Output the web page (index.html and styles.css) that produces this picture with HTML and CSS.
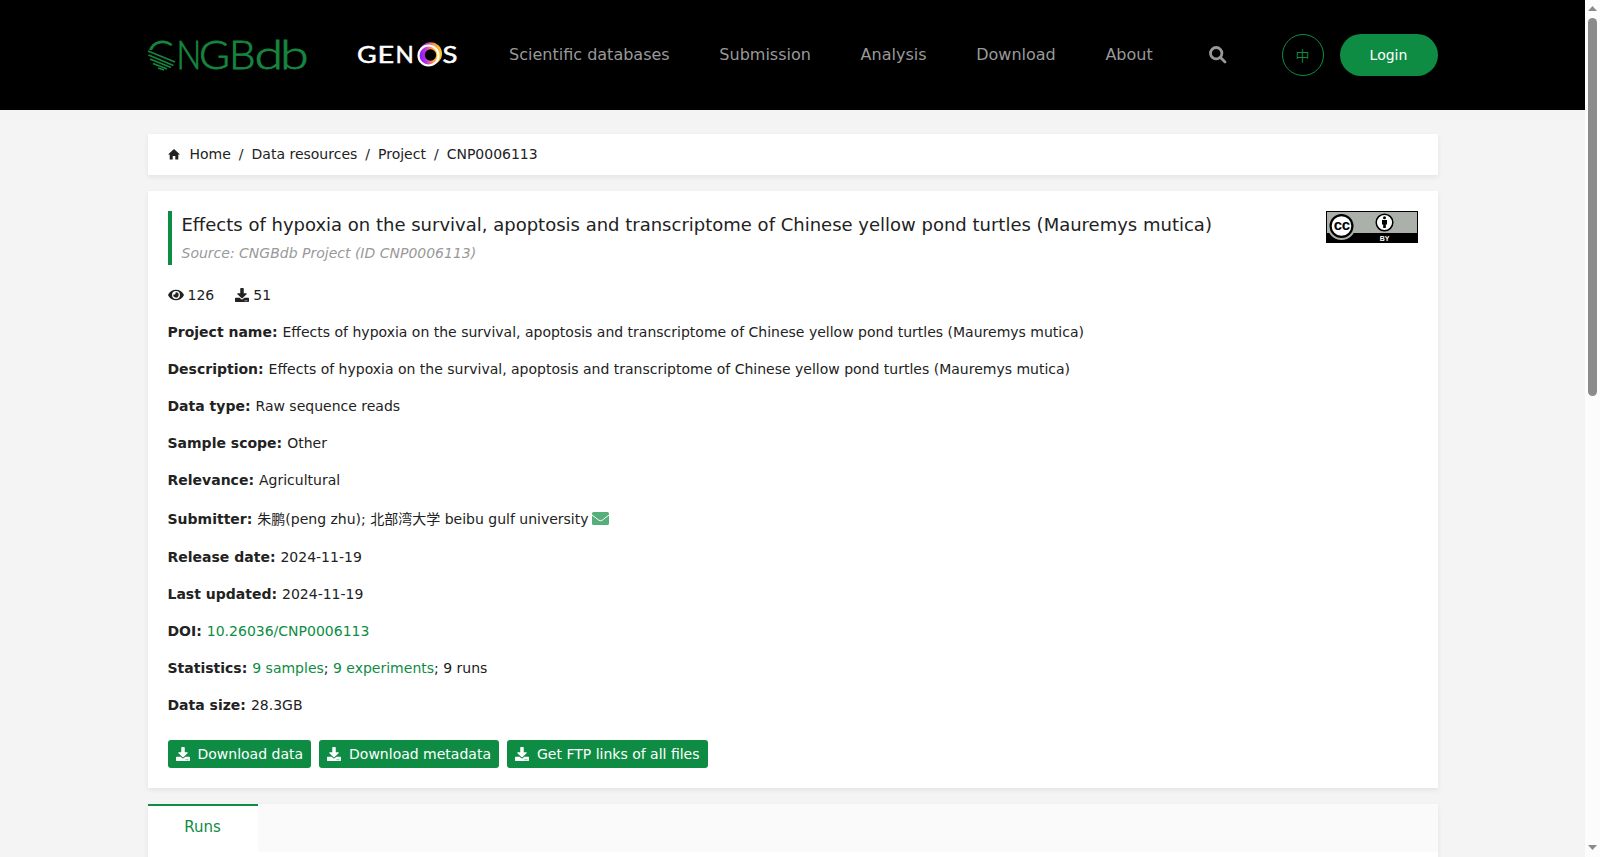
FILE: index.html
```html
<!DOCTYPE html>
<html lang="en">
<head>
    <meta charset="UTF-8">
    <title>CNP0006113 - CNGBdb</title>
    <link rel="stylesheet" href="styles.css">
</head>
<body>
    <svg width="0" height="0" class="sprite">
        <symbol id="download" viewBox="0 0 512 512">
            <path d="M216 0h80c13.300 0 24 10.700 24 24v168h87.700c17.800 0 26.700 21.500 14.100 34.100L269.700 378.300c-7.500 7.500-19.800 7.500-27.300 0L90.100 226.100c-12.600-12.600-3.700-34.100 14.100-34.100H192V24c0-13.300 10.700-24 24-24zm296 376v112c0 13.300-10.700 24-24 24H24c-13.300 0-24-10.700-24-24V376c0-13.300 10.700-24 24-24h146.700l49 49c20.100 20.100 52.500 20.100 72.600 0l49-49H488c13.300 0 24 10.700 24 24zm-124 88c0-11-9-20-20-20s-20 9-20 20 9 20 20 20 20-9 20-20zm64 0c0-11-9-20-20-20s-20 9-20 20 9 20 20 20 20-9 20-20z"/>
        </symbol>
    </svg>

    <div class="page">
        <header class="header">
            <div class="container header-inner">
                <svg class="logo" width="160" height="34" viewBox="0 0 160 34">
                    <g class="logo-text">
                        <text transform="translate(-1.500 31)">C</text>
                        <text transform="translate(28.500 31) scale(.82 1)">N</text>
                        <text transform="translate(51 31) scale(1.050 1)">G</text>
                        <text transform="translate(81 31) scale(1.050 1)">B</text>
                        <text transform="translate(106.500 31) scale(1.300 1)">d</text>
                        <text transform="translate(132 31) scale(1.300 1)">b</text>
                    </g>
                    <!-- striped lower half of the C -->
                    <rect x="-1" y="12" width="29" height="22" fill="#000"/>
                    <path class="logo-stripes" d="M0 13l27 11M.5 17l25 10.500M2 21l21 8.500M5 25.500l14 5.500M10 30l6 2"/>
                </svg>
                <svg class="genos" width="102" height="28" viewBox="0 0 102 28">
                    <defs>
                        <linearGradient id="ring" x1="0" y1="0.500" x2="1" y2="0.400">
                            <stop offset="0" stop-color="#7a12ff"/>
                            <stop offset="0.350" stop-color="#b832e0"/>
                            <stop offset="0.650" stop-color="#ff8a50"/>
                            <stop offset="1" stop-color="#ffd21e"/>
                        </linearGradient>
                    </defs>
                    <g class="genos-text">
                        <text transform="translate(-1 22) scale(1.120 1)">G</text>
                        <text transform="translate(19.500 22) scale(1.200 1)">E</text>
                        <text transform="translate(37.500 22)">N</text>
                        <text transform="translate(84.500 22) scale(1.150 1)">S</text>
                    </g>
                    <circle cx="72.500" cy="12.700" r="11.500" fill="url(#ring)"/>
                    <circle cx="70.500" cy="14.500" r="10" fill="url(#ring)" stroke="#fff" stroke-width="2.200"/>
                    <circle cx="72.500" cy="14" r="5.700" fill="#000"/>
                </svg>
                <nav class="nav">
                    <a>Scientific databases</a>
                    <a>Submission</a>
                    <a>Analysis</a>
                    <a>Download</a>
                    <a>About</a>
                </nav>
                <svg class="search" width="18" height="18" viewBox="0 0 18 18">
                    <circle cx="7.200" cy="7.200" r="5.700"/>
                    <path d="M11.500 11.500l4.500 4.500"/>
                </svg>
                <a class="lang">中</a>
                <a class="login">Login</a>
            </div>
        </header>

        <main class="container">
            <div class="breadcrumb">
                <svg class="home" width="12" height="11" viewBox="0 0 12 11"><path d="M6 0L12 5.500H10.300V10.500H7.300V7H4.700V10.500H1.700V5.500H0z"/></svg>
                <a>Home</a><span>/</span><a>Data resources</a><span>/</span><a>Project</a><span>/</span><a>CNP0006113</a>
            </div>

            <section class="card">
                <div class="title-row">
                    <div class="title">
                        <h1>Effects of hypoxia on the survival, apoptosis and transcriptome of Chinese yellow pond turtles (Mauremys mutica)</h1>
                        <p>Source: CNGBdb Project (ID CNP0006113)</p>
                    </div>
                    <svg class="license" width="92" height="32" viewBox="0 0 92 32">
                        <rect width="92" height="32" fill="#000"/>
                        <rect x="1" y="1" width="90" height="21" fill="#abb1aa"/>
                        <circle cx="15.500" cy="15" r="14" fill="#abb1aa"/>
                        <circle cx="15.500" cy="15" r="10.900" fill="#fff" stroke="#000" stroke-width="2.200"/>
                        <text class="cc" x="15.700" y="19">cc</text>
                        <circle cx="58.500" cy="11.500" r="8.300" fill="#fff" stroke="#000" stroke-width="1.500"/>
                        <circle cx="58.500" cy="6.800" r="1.500"/>
                        <path d="M56 9h5v4.500h-1.200V17h-2.600v-3.500H56z"/>
                        <text class="by" x="58.500" y="30">BY</text>
                    </svg>
                </div>

                <div class="counts">
                    <svg width="16" height="14" viewBox="0 0 576 512"><path d="M572.500 241.400C518.300 135.600 410.900 64 288 64S57.700 135.600 3.500 241.400a32.400 32.400 0 0 0 0 29.200C57.700 376.400 165.100 448 288 448s230.300-71.600 284.500-177.400a32.400 32.400 0 0 0 0-29.200zM288 400a144 144 0 1 1 144-144 143.900 143.900 0 0 1-144 144zm0-240a95.300 95.300 0 0 0-25.300 3.800 47.900 47.900 0 0 1-66.900 66.900A95.800 95.800 0 1 0 288 160z"/></svg>
                    <span class="views">126</span>
                    <svg width="14" height="14"><use href="#download"/></svg>
                    <span>51</span>
                </div>

                <div class="row"><b>Project name:</b> Effects of hypoxia on the survival, apoptosis and transcriptome of Chinese yellow pond turtles (Mauremys mutica)</div>
                <div class="row"><b>Description:</b> Effects of hypoxia on the survival, apoptosis and transcriptome of Chinese yellow pond turtles (Mauremys mutica)</div>
                <div class="row"><b>Data type:</b> Raw sequence reads</div>
                <div class="row"><b>Sample scope:</b> Other</div>
                <div class="row"><b>Relevance:</b> Agricultural</div>
                <div class="row submitter"><b>Submitter:</b> 朱鹏(peng zhu); 北部湾大学 beibu gulf university <svg class="mail" width="17" height="13" viewBox="0 0 17 13"><rect width="17" height="13" rx="1.500"/><path d="M0 3l6.500 5q2 1.500 4 0L17 3"/></svg></div>
                <div class="row"><b>Release date:</b> 2024-11-19</div>
                <div class="row"><b>Last updated:</b> 2024-11-19</div>
                <div class="row"><b>DOI:</b> <a>10.26036/CNP0006113</a></div>
                <div class="row"><b>Statistics:</b> <a>9 samples</a>; <a>9 experiments</a>; 9 runs</div>
                <div class="row"><b>Data size:</b> 28.3GB</div>

                <div class="buttons">
                    <button><svg width="14" height="14"><use href="#download"/></svg>Download data</button>
                    <button><svg width="14" height="14"><use href="#download"/></svg>Download metadata</button>
                    <button><svg width="14" height="14"><use href="#download"/></svg>Get FTP links of all files</button>
                </div>
            </section>

            <section class="tabs">
                <div class="tab-bar">
                    <a class="tab">Runs</a>
                </div>
            </section>
        </main>
    </div>

    <div class="scrollbar">
        <svg width="9" height="5" viewBox="0 0 9 5"><path d="M4.500 0L9 5H0z"/></svg>
        <div class="thumb"></div>
        <svg class="down" width="9" height="5" viewBox="0 0 9 5"><path d="M0 0h9L4.500 5z"/></svg>
    </div>
</body>
</html>
```

FILE: styles.css
```css
* {
    box-sizing: border-box;
}

body {
    display: flex;
    margin: 0;
    height: 857px;
    overflow: hidden;
    background: #f4f4f4;
    color: #222;
    font: 14px/22px "DejaVu Sans", "Noto Sans CJK SC", sans-serif;
}

.sprite {
    position: absolute;
}

.page {
    width: 1585px;
    height: 857px;
    overflow: hidden;
}

.container {
    width: 1290px;
    margin: 0 auto;
}

/* header */
.header {
    height: 110px;
    background: #000;
}

.header-inner {
    display: flex;
    align-items: center;
    height: 110px;
}

.logo {
    overflow: visible;
}

.logo-text {
    font-family: Lato, sans-serif;
    font-size: 40px;
    font-weight: 300;
    fill: #16863f;
    stroke: #16863f;
    stroke-width: 0.8;
}

.logo-stripes {
    fill: none;
    stroke: #16863f;
    stroke-width: 1.7;
}

.genos {
    margin-left: 50px;
    overflow: visible;
}

.genos-text {
    font-family: Lato, sans-serif;
    font-size: 24px;
    font-weight: 400;
    fill: #fff;
    stroke: #fff;
    stroke-width: 0.5;
}

.nav {
    display: flex;
    gap: 49.7px;
    margin-left: 49.6px;
    font-size: 16px;
    color: #999;
}

.search {
    margin-left: 56px;
    fill: none;
    stroke: #999;
    stroke-width: 2.8;
    stroke-linecap: round;
}

.lang {
    width: 42px;
    height: 42px;
    margin-left: auto;
    border: 1px solid #0e8c43;
    border-radius: 21px;
    color: #0e8c43;
    font-family: "Noto Sans CJK SC", sans-serif;
    font-weight: 350;
    line-height: 40px;
    text-align: center;
}

.login {
    width: 98px;
    height: 42px;
    margin-left: 16px;
    border-radius: 21px;
    background: #0e8c43;
    color: #fff;
    line-height: 42px;
    text-align: center;
}

/* breadcrumb */
.breadcrumb {
    display: flex;
    align-items: center;
    height: 41px;
    margin: 24px 0 16px;
    padding: 0 20px 2px;
    background: #fff;
    box-shadow: 0 2px 5px rgba(0, 0, 0, 0.07);
}

.breadcrumb span {
    margin: 0 8px;
}

.home {
    margin: 2px 9.5px 0 0.5px;
    fill: #222;
}

/* project card */
.card {
    height: 597px;
    padding: 20px;
    background: #fff;
    box-shadow: 0 2px 5px rgba(0, 0, 0, 0.07);
}

.title-row {
    display: flex;
    justify-content: space-between;
}

.title {
    height: 54px;
    padding-left: 10px;
    border-left: 4px solid #0e8c43;
}

.title h1 {
    margin: 0;
    font-size: 18px;
    font-weight: normal;
    line-height: 28px;
}

.title p {
    margin: 3px 0 0;
    color: #999;
    font-style: italic;
}

.cc {
    font: bold 15px "Liberation Sans", sans-serif;
    letter-spacing: -0.5px;
    text-anchor: middle;
}

.by {
    font: bold 7px "Liberation Sans", sans-serif;
    fill: #fff;
    text-anchor: middle;
}

.counts {
    display: flex;
    align-items: center;
    gap: 4px;
    margin: 19px 0 15px;
    fill: #222;
}

.views {
    margin-right: 17px;
}

.row {
    height: 22px;
    margin-bottom: 15px;
}

.row b {
    margin-right: 0.5px;
}

.row a {
    color: #0e8c43;
}

.submitter {
    height: 25px;
    line-height: 27px;
}

.mail {
    margin-left: -1px;
    vertical-align: -1px;
    fill: #56ae7b;
    stroke: none;
}

.mail path {
    fill: none;
    stroke: #fff;
}

.buttons {
    display: flex;
    gap: 8px;
    margin-top: 24px;
}

.buttons button {
    display: flex;
    align-items: center;
    gap: 8px;
    height: 28px;
    padding: 0 8px;
    border: 0;
    border-radius: 3px;
    background: #0e8c43;
    color: #fff;
    fill: #fff;
    font: inherit;
}

/* tabs */
.tabs {
    height: 200px;
    margin-top: 16px;
    background: #fff;
    box-shadow: 0 2px 5px rgba(0, 0, 0, 0.07);
}

.tab-bar {
    display: flex;
    height: 48px;
    background: #fafafa;
}

.tab {
    width: 110px;
    border-top: 2px solid #0e8c43;
    background: #fff;
    color: #0e8c43;
    font-size: 15px;
    line-height: 42px;
    text-align: center;
}

/* scrollbar */
.scrollbar {
    display: flex;
    flex-direction: column;
    align-items: center;
    width: 15px;
    height: 857px;
    padding: 6px 0 7px;
    background: #fcfcfc;
    fill: #8b8b8b;
}

.thumb {
    width: 9px;
    height: 378px;
    margin-top: 7px;
    border-radius: 5px;
    background: #8b8b8b;
}

.down {
    margin-top: auto;
}
```
